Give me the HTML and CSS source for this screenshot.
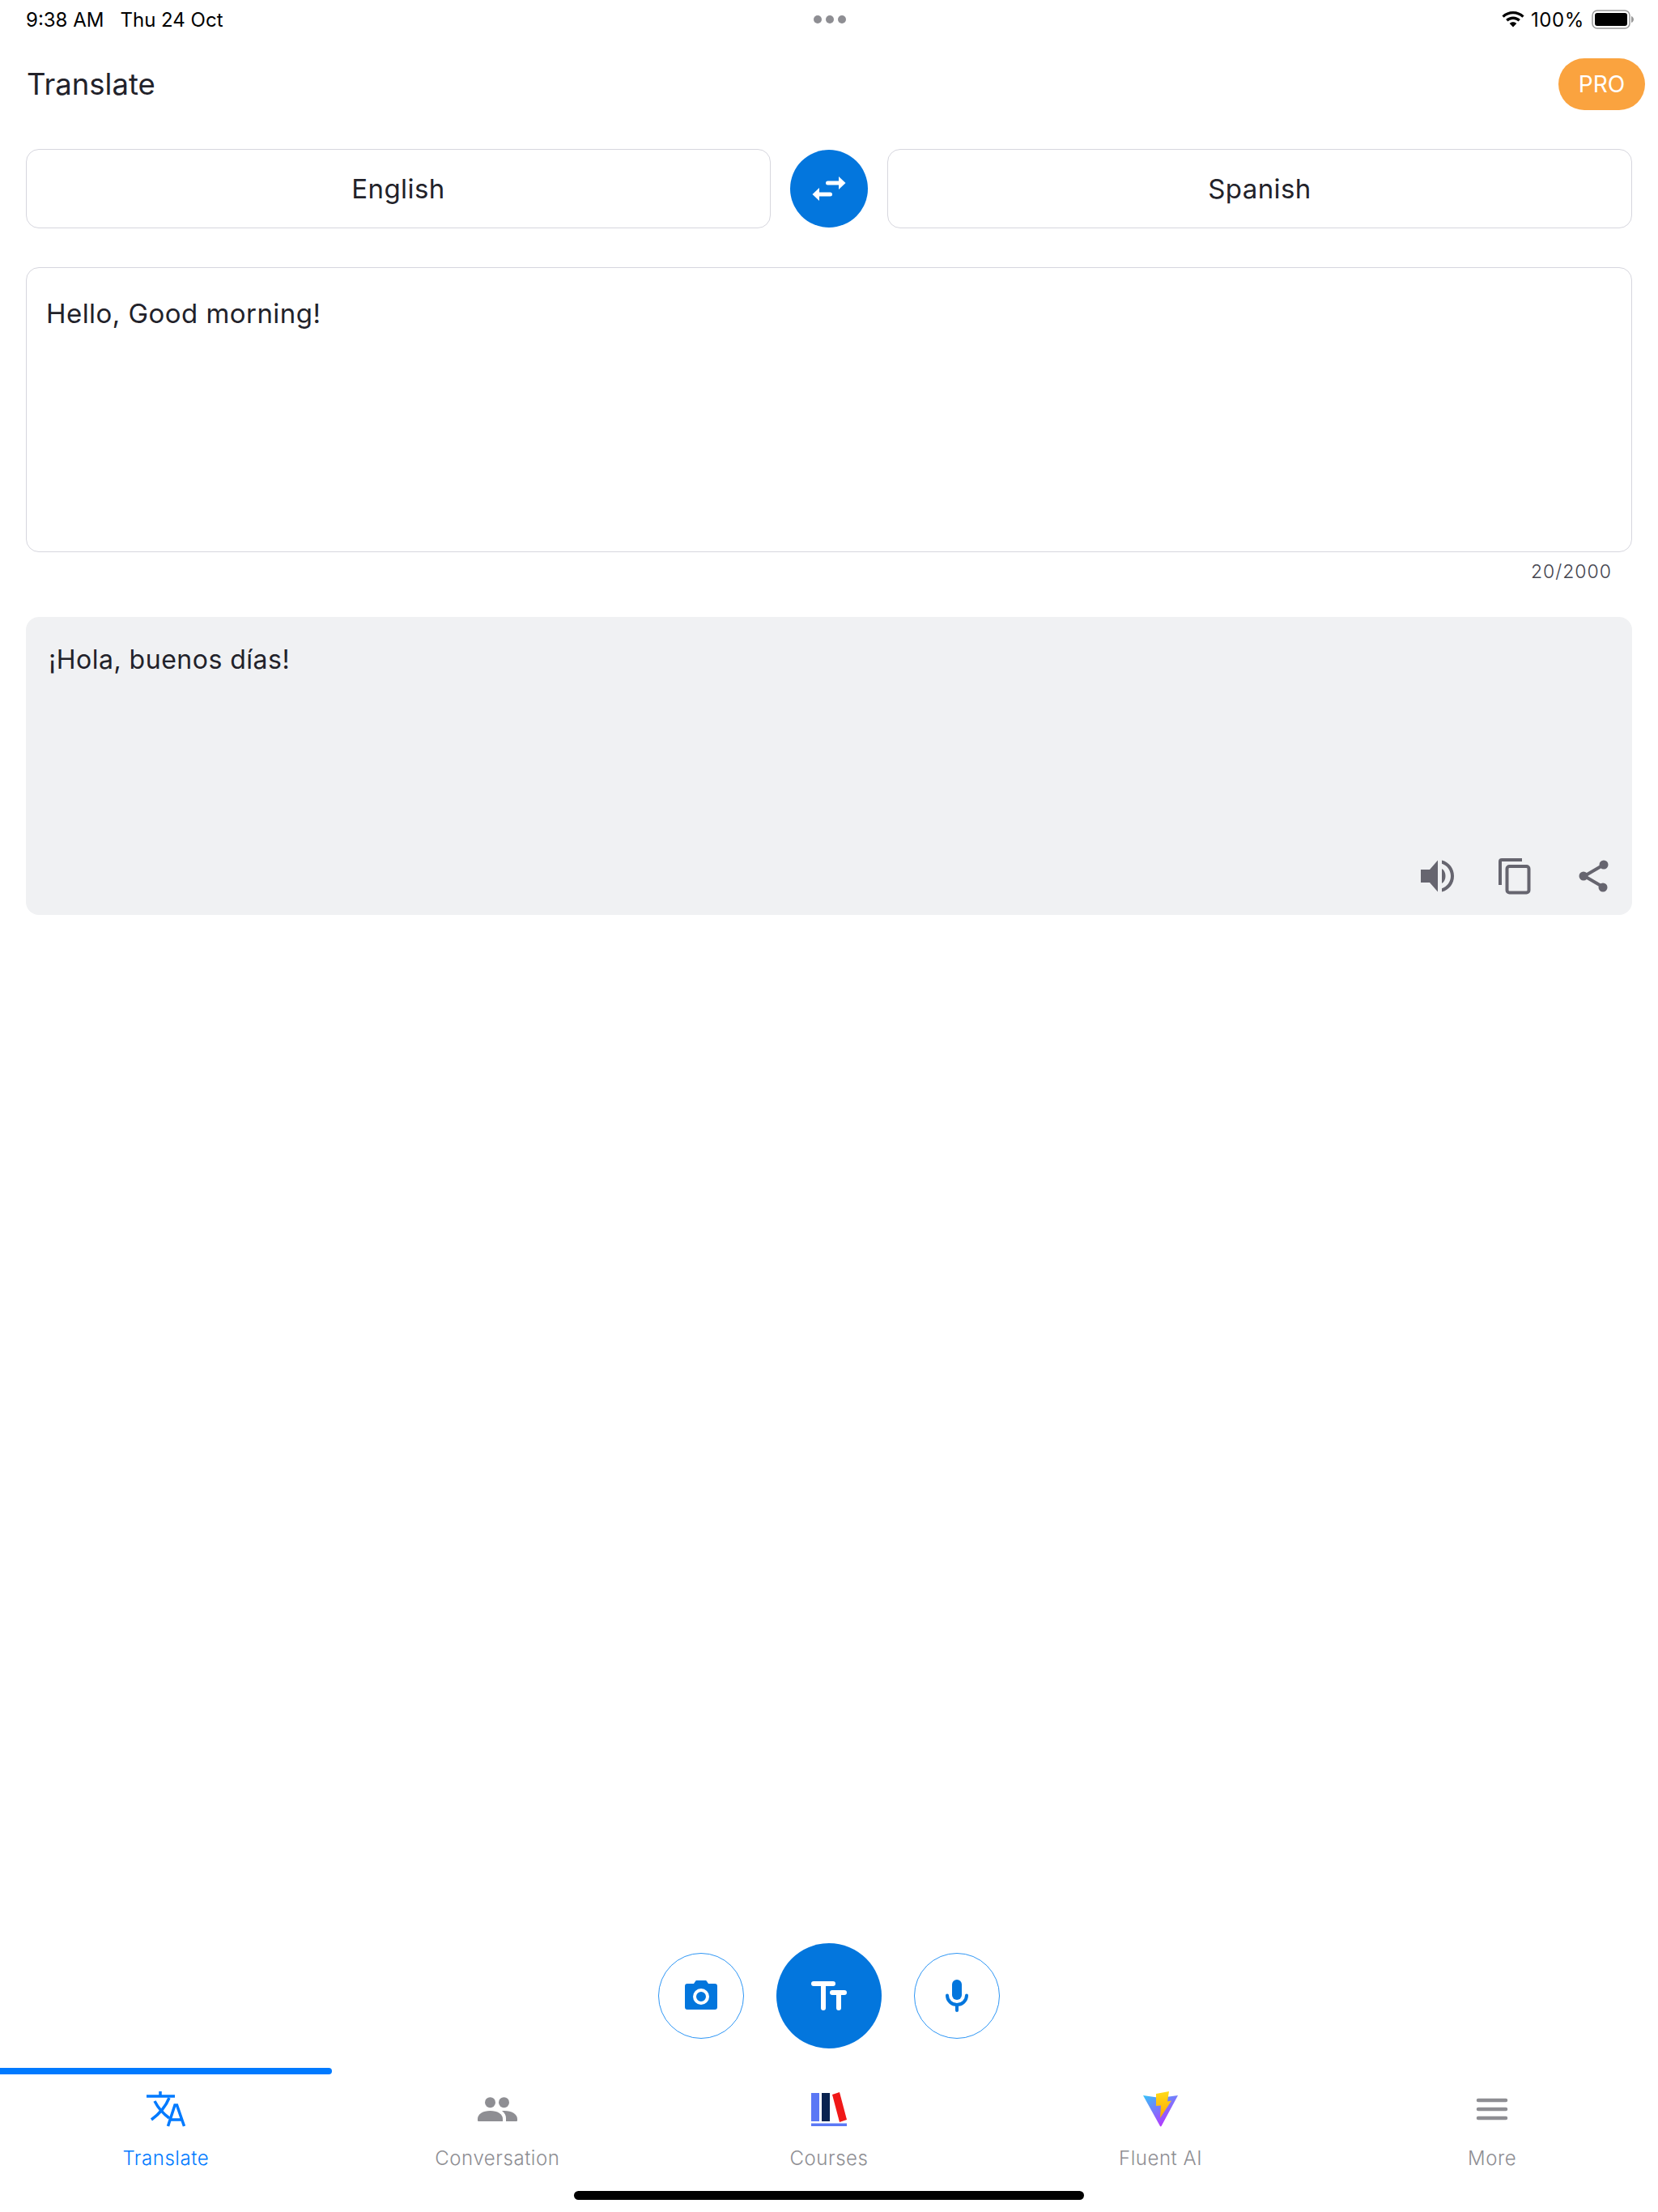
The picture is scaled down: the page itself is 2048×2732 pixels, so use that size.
FILE: index.html
```html
<!DOCTYPE html>
<html lang="en">
<head>
  <meta charset="UTF-8" />
  <meta name="viewport" content="width=device-width, initial-scale=1.0" />
  <title>Translate</title>
  <link rel="stylesheet" href="styles.css">
</head>
<body>
  <div class="app-container">
    <div class="status-bar">
      <div class="status-left"><span>9:38 AM</span><span>Thu 24 Oct</span></div>
      <div class="status-dots"><i></i><i></i><i></i></div>
      <div class="status-right">
        <svg class="wifi" width="28" height="20" viewBox="0 0 28 20">
          <path d="M14 0C8.800 0 4 2 0.400 5.400L2.700 7.800C5.700 5 9.700 3.300 14 3.300s8.300 1.700 11.300 4.500l2.300-2.400C24 2 19.200 0 14 0z" fill="#000"/>
          <path d="M14 6.600c-3.400 0-6.500 1.300-8.900 3.500l2.400 2.400c1.700-1.600 4-2.500 6.500-2.500s4.800 0.900 6.500 2.500l2.400-2.400C20.500 7.900 17.400 6.600 14 6.600z" fill="#000"/>
          <path d="M14 13.300c-1.700 0-3.200 0.600-4.300 1.700L14 19.500l4.300-4.500c-1.100-1.100-2.600-1.700-4.300-1.700z" fill="#000"/>
        </svg>
        <span class="battery-pct">100%</span>
        <svg class="battery" width="52" height="24" viewBox="0 0 52 24">
          <rect x="1" y="1" width="46" height="22" rx="6" fill="none" stroke="#999" stroke-width="1.500"/>
          <rect x="4" y="4" width="40" height="16" rx="3" fill="#000"/>
          <path d="M49 8c1.700 0.500 3 2.200 3 4s-1.300 3.500-3 4z" fill="#999"/>
        </svg>
      </div>
    </div>

    <header class="top-bar">
      <h1>Translate</h1>
      <button class="pro-btn">PRO</button>
    </header>

    <main>
      <div class="lang-row">
        <button class="lang-btn">English</button>
        <button class="swap-btn">
          <svg width="48" height="34" viewBox="0 0 48 34">
            <path d="M22.500 10H38" stroke="#fff" stroke-width="5" stroke-linecap="round"/>
            <path d="M36 2 44.500 10 36 18z" fill="#fff"/>
            <path d="M25.500 24H10" stroke="#fff" stroke-width="5" stroke-linecap="round"/>
            <path d="M12 16 3.500 24 12 32z" fill="#fff"/>
          </svg>
        </button>
        <button class="lang-btn">Spanish</button>
      </div>

      <div class="input-box">Hello, Good morning!</div>
      <div class="counter">20/2000</div>

      <div class="output-box">
        <div class="output-text">¡Hola, buenos días!</div>
        <div class="output-actions">
          <svg class="speaker" width="44" height="42" viewBox="0 0 44 42">
            <path d="M1 13h11L22 1.500v39L12 29H1z" fill="#66656f"/>
            <path d="M27 12c3 1.800 4.500 5 4.500 9s-1.500 7.200-4.500 9z" fill="#66656f"/>
            <path d="M27 1.500c9 2.200 15 10 15 19.500s-6 17.300-15 19.500v-4.300c6.500-2 11-8.200 11-15.200s-4.500-13.200-11-15.200z" fill="#66656f"/>
          </svg>
          <svg class="copy" width="40" height="46" viewBox="0 0 40 46">
            <path d="M29 3H4a2 2 0 0 0-2 2v29" fill="none" stroke="#66656f" stroke-width="4"/>
            <rect x="10.500" y="11" width="27" height="32.500" rx="3" fill="none" stroke="#66656f" stroke-width="4"/>
          </svg>
          <svg class="share" width="38" height="42" viewBox="0 0 38 42">
            <path d="M31 7 7 21l24 14" fill="none" stroke="#66656f" stroke-width="4"/>
            <circle cx="31" cy="7" r="5.500" fill="#66656f"/>
            <circle cx="6" cy="21" r="5.500" fill="#66656f"/>
            <circle cx="30" cy="35" r="5.500" fill="#66656f"/>
          </svg>
        </div>
      </div>
    </main>

    <div class="input-modes">
      <button class="mode-btn">
        <svg class="camera" width="40" height="36" viewBox="0 0 40 36">
          <path d="M3 4h8l2-3a2 2 0 0 1 2-1h10a2 2 0 0 1 2 1l2 3h8a3 3 0 0 1 3 3v26a3 3 0 0 1-3 3H3a3 3 0 0 1-3-3V7a3 3 0 0 1 3-3z" fill="#0376dd"/>
          <circle cx="20" cy="20" r="8" fill="none" stroke="#fff" stroke-width="4"/>
        </svg>
      </button>
      <button class="mode-btn mode-active">
        <svg width="46" height="36" viewBox="0 0 46 36">
          <path d="M4 3h24M16 3v30" fill="none" stroke="#fff" stroke-width="6" stroke-linecap="round"/>
          <path d="M27 14h15M35 14v19" fill="none" stroke="#fff" stroke-width="6" stroke-linecap="round"/>
        </svg>
      </button>
      <button class="mode-btn">
        <svg width="28" height="40" viewBox="0 0 28 40">
          <rect x="8" y="0" width="12" height="25" rx="6" fill="#0376dd"/>
          <path d="M2 19.500c0 6.500 5.500 11.500 12 11.500s12-5 12-11.500" fill="none" stroke="#0376dd" stroke-width="4" stroke-linecap="round"/>
          <path d="M14 31v7" stroke="#0376dd" stroke-width="4" stroke-linecap="round"/>
        </svg>
      </button>
    </div>

    <div class="tab-indicator"></div>
    <nav class="tab-bar">
      <div class="tab active">
        <div class="tab-icon">
          <svg width="48" height="44" viewBox="0 0 48 44">
            <path d="M0 6h35M17 0v6" fill="none" stroke="#007aff" stroke-width="3.500"/>
            <path d="M10 12c4 8 10 15 18 21M28 8c-4 10-11 19-22 27" fill="none" stroke="#007aff" stroke-width="3.500"/>
            <path d="M26.500 43 35 17h2.500L46.500 43M29.500 35h14" fill="none" stroke="#007aff" stroke-width="3.500"/>
          </svg>
        </div>
        <span>Translate</span>
      </div>
      <div class="tab">
        <div class="tab-icon">
          <svg width="49" height="30" viewBox="0 0 49 30">
            <ellipse cx="15.500" cy="6.700" rx="6.500" ry="6.500" fill="#8e8e93"/>
            <ellipse cx="32.500" cy="6.700" rx="6.500" ry="6.500" fill="#8e8e93"/>
            <path d="M0 27c0-6 6.500-10 15.500-10S31 21 31 27v3H1a1 1 0 0 1-1-1z" fill="#8e8e93"/>
            <path d="M33 17c9 0 16 4 16 10v2a1 1 0 0 1-1 1H35v-4c0-3.500-1.500-6.500-5-8.800 1-.2 2-.2 3-.2z" fill="#8e8e93"/>
          </svg>
        </div>
        <span>Conversation</span>
      </div>
      <div class="tab">
        <div class="tab-icon">
          <svg width="44" height="42" viewBox="0 0 44 42">
            <rect x="0" y="1" width="10" height="35" fill="#5b78f5"/>
            <rect x="13" y="1" width="10" height="35" fill="#0a2350"/>
            <path d="M26 3 35 0 44 34 35 37z" fill="#f01818"/>
            <rect x="0" y="38.500" width="44" height="3.500" fill="#5b78f5"/>
          </svg>
        </div>
        <span>Courses</span>
      </div>
      <div class="tab">
        <div class="tab-icon">
          <svg width="43" height="44" viewBox="0 0 43 44">
            <defs>
              <linearGradient id="viteBody" x1="0" y1="0" x2="0.700" y2="1">
                <stop offset="0" stop-color="#35c3f8"/>
                <stop offset="1" stop-color="#c02cff"/>
              </linearGradient>
              <linearGradient id="viteBolt" x1="0" y1="0" x2="0" y2="1">
                <stop offset="0" stop-color="#ffdc1a"/>
                <stop offset="1" stop-color="#ffa800"/>
              </linearGradient>
            </defs>
            <path d="M0 5 21 8 43 5 22.500 43a1 1 0 0 1-1.500 0z" fill="url(#viteBody)"/>
            <path d="M16 3 32 0 30 12.500 35 11.500 21 33 22 17.500 16 18z" fill="url(#viteBolt)"/>
          </svg>
        </div>
        <span>Fluent AI</span>
      </div>
      <div class="tab">
        <div class="tab-icon">
          <svg width="40" height="30" viewBox="0 0 40 30">
            <path d="M3 4h34M3 15h34M3 26h34" stroke="#8e8e93" stroke-width="4.500" stroke-linecap="round"/>
          </svg>
        </div>
        <span>More</span>
      </div>
    </nav>
    <div class="home-area"><div class="home-bar"></div></div>
  </div>
</body>
</html>
```

FILE: styles.css
```css
body {
  font-family: 'Inter', 'Liberation Sans', sans-serif;
  background-color: #fff;
  margin: 0;
  color: #22222a;
}
button {
  font-family: inherit;
  cursor: pointer;
}
.app-container {
  display: flex;
  flex-direction: column;
  height: 100vh;
  overflow: hidden;
}

/* status bar */
.status-bar {
  display: grid;
  grid-template-columns: 1fr auto 1fr;
  align-items: center;
  height: 48px;
  padding: 0 30px 0 32px;
  color: #000;
  font-size: 24px;
}
.status-left {
  display: flex;
  gap: 20px;
}
.status-dots {
  display: flex;
  gap: 5px;
}
.status-dots i {
  width: 10px;
  height: 10px;
  border-radius: 50%;
  background: #8e8e93;
}
.status-right {
  display: flex;
  align-items: center;
  justify-content: flex-end;
  gap: 8px;
}
.battery-pct {
  letter-spacing: 0.6px;
}
.battery {
  margin-left: 1px;
}

/* title */
.top-bar {
  display: flex;
  align-items: center;
  justify-content: space-between;
  height: 112px;
  padding: 0 16px 0 33px;
}
.top-bar h1 {
  margin: 0;
  font-size: 36.5px;
  font-weight: 400;
  color: #22222a;
}
.pro-btn {
  width: 107px;
  height: 64px;
  border: none;
  border-radius: 32px;
  background-color: #faa33f;
  color: #fff;
  font-size: 28px;
}

main {
  padding: 24px 32px 0;
}
.lang-row {
  display: flex;
  align-items: flex-start;
  gap: 24px;
}
.lang-btn {
  flex: 1;
  height: 98px;
  background: #fff;
  border: 1.5px solid #d6d6de;
  border-radius: 16px;
  font-size: 33px;
  letter-spacing: 0.4px;
  color: #22222a;
}
.swap-btn {
  display: flex;
  align-items: center;
  justify-content: center;
  flex: none;
  width: 96px;
  height: 96px;
  margin-top: 1px;
  padding: 0;
  border: none;
  border-radius: 50%;
  background-color: #0376dd;
}
.input-box {
  height: 352px;
  margin-top: 48px;
  padding: 36px 24px;
  box-sizing: border-box;
  border: 1.5px solid #d6d6de;
  border-radius: 16px;
  font-size: 33px;
  letter-spacing: 0.45px;
}
.counter {
  margin: 10px 25px 0 0;
  height: 70px;
  text-align: right;
  font-size: 23px;
  font-weight: 300;
  letter-spacing: 1px;
  color: #45454f;
}
.output-box {
  display: flex;
  flex-direction: column;
  justify-content: space-between;
  height: 368px;
  box-sizing: border-box;
  padding: 33px 28px 25px 28px;
  background-color: #f0f1f3;
  border-radius: 16px;
  font-size: 32px;
  letter-spacing: 0.5px;
}
.output-actions {
  display: flex;
  align-items: center;
  justify-content: flex-end;
}
.copy {
  margin-left: 53px;
}
.share {
  margin-left: 59px;
}

/* camera, text, mic */
.input-modes {
  display: flex;
  align-items: center;
  justify-content: center;
  gap: 40px;
  margin-top: auto;
}
.mode-btn {
  display: flex;
  align-items: center;
  justify-content: center;
  width: 106px;
  height: 106px;
  padding: 0;
  background: #fff;
  border: 1.5px solid #2e96f5;
  border-radius: 50%;
}
.mode-active {
  width: 130px;
  height: 130px;
  background-color: #0376dd;
  border: none;
}
.camera {
  margin-bottom: 3px;
}

/* bottom tabs */
.tab-indicator {
  width: 410px;
  height: 8px;
  margin-top: 24px;
  background-color: #007aff;
  border-radius: 0 4px 4px 0;
}
.tab-bar {
  display: flex;
}
.tab {
  flex: 1;
  display: flex;
  flex-direction: column;
  align-items: center;
  justify-content: space-between;
  height: 118px;
  padding-top: 20px;
  box-sizing: border-box;
  font-size: 24px;
  font-weight: 300;
  letter-spacing: 0.55px;
  color: #8e8e93;
}
.tab.active {
  color: #007aff;
}
.tab-icon {
  display: flex;
  align-items: center;
  justify-content: center;
  height: 46px;
}
.home-area {
  display: flex;
  justify-content: center;
  height: 52px;
  padding-top: 26px;
  box-sizing: border-box;
}
.home-bar {
  width: 630px;
  height: 11px;
  border-radius: 6px;
  background-color: #000;
}
```
